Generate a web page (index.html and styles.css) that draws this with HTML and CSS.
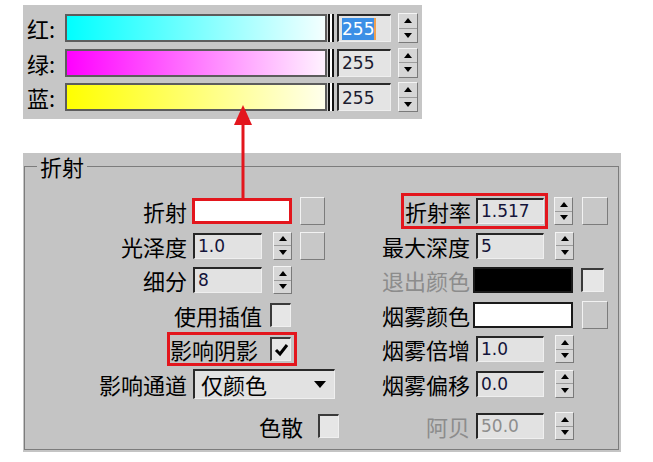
FILE: index.html
```html
<!DOCTYPE html>
<html lang="zh-CN">
<head>
    <meta charset="UTF-8">
    <title>折射</title>
    <link rel="stylesheet" href="styles.css">
</head>
<body>
    <div class="picker">
        <div class="chan">
            <span class="chan-lab">红:</span>
            <div class="bar bar-r"></div>
            <div class="thumb"></div>
            <div class="num"><span class="sel">255</span><span class="caret"></span></div>
            <span class="spin spin-big"><i class="up"></i><i class="dn"></i></span>
        </div>
        <div class="chan">
            <span class="chan-lab">绿:</span>
            <div class="bar bar-g"></div>
            <div class="thumb"></div>
            <div class="num">255</div>
            <span class="spin spin-big"><i class="up"></i><i class="dn"></i></span>
        </div>
        <div class="chan">
            <span class="chan-lab">蓝:</span>
            <div class="bar bar-b"></div>
            <div class="thumb"></div>
            <div class="num">255</div>
            <span class="spin spin-big"><i class="up"></i><i class="dn"></i></span>
        </div>
    </div>

    <div class="panel">
        <fieldset class="group">
            <legend>折射</legend>
            <div class="cols">
                <div class="col col-left">
                    <div class="row">
                        <span class="lab lab-tight">折射</span>
                        <span class="swatch swatch-hot"></span>
                        <span class="btn"></span>
                    </div>
                    <div class="row">
                        <span class="lab">光泽度</span>
                        <span class="field">1.0</span>
                        <span class="spin"><i class="up"></i><i class="dn"></i></span>
                        <span class="btn"></span>
                    </div>
                    <div class="row">
                        <span class="lab">细分</span>
                        <span class="field">8</span>
                        <span class="spin"><i class="up"></i><i class="dn"></i></span>
                    </div>
                    <div class="row">
                        <span class="lab lab-mid">使用插值</span>
                        <span class="check"></span>
                    </div>
                    <div class="row">
                        <span class="hl hl-shadow">
                            <span class="lab lab-auto">影响阴影</span>
                            <span class="check">
                                <svg width="17" height="20" viewBox="0 0 17 20"><polyline points="3,10 7,14 14,5" fill="none" stroke="#000" stroke-width="3"/></svg>
                            </span>
                        </span>
                    </div>
                    <div class="row">
                        <span class="lab">影响通道</span>
                        <span class="combo">仅颜色<i class="drop"></i></span>
                    </div>
                    <div class="row row-last">
                        <span class="lab lab-far">色散</span>
                        <span class="check"></span>
                    </div>
                </div>

                <div class="col col-right">
                    <div class="row">
                        <span class="hl hl-ior">
                            <span class="lab lab-auto">折射率</span>
                            <span class="field">1.517</span>
                        </span>
                        <span class="spin spin-near"><i class="up"></i><i class="dn"></i></span>
                        <span class="btn btn-r"></span>
                    </div>
                    <div class="row">
                        <span class="lab">最大深度</span>
                        <span class="field">5</span>
                        <span class="spin"><i class="up"></i><i class="dn"></i></span>
                    </div>
                    <div class="row">
                        <span class="lab lab-sw dim">退出颜色</span>
                        <span class="swatch swatch-black"></span>
                        <span class="check check-r"></span>
                    </div>
                    <div class="row">
                        <span class="lab lab-sw">烟雾颜色</span>
                        <span class="swatch swatch-white"></span>
                        <span class="btn btn-r"></span>
                    </div>
                    <div class="row">
                        <span class="lab">烟雾倍增</span>
                        <span class="field">1.0</span>
                        <span class="spin"><i class="up"></i><i class="dn"></i></span>
                    </div>
                    <div class="row">
                        <span class="lab">烟雾偏移</span>
                        <span class="field">0.0</span>
                        <span class="spin"><i class="up"></i><i class="dn"></i></span>
                    </div>
                    <div class="row row-last">
                        <span class="lab dim">阿贝</span>
                        <span class="field field-dim">50.0</span>
                        <span class="spin"><i class="up"></i><i class="dn"></i></span>
                    </div>
                </div>
            </div>
        </fieldset>
    </div>

    <!-- pointer from the refraction swatch up to the colour picker -->
    <svg class="arrow" width="30" height="100" viewBox="0 0 30 100">
        <line x1="15" y1="22" x2="15" y2="98" stroke="#e3161d" stroke-width="3"/>
        <polygon points="15,5 6,25 24,25" fill="#e3161d"/>
    </svg>
</body>
</html>
```

FILE: styles.css
```css
body {
    margin: 0;
    background-color: #fff;
    font-family: "Noto Sans CJK SC", "Noto Sans", sans-serif;
    color: #000;
    position: relative;
    width: 653px;
    height: 462px;
    overflow: hidden;
}

/* colour picker */
.picker {
    margin: 5px 0 0 23px;
    width: 399px;
    height: 114px;
    box-sizing: border-box;
    padding: 9px 0 0 4px;
    background-color: #c6c6c6;
    display: flex;
    flex-direction: column;
    gap: 6.5px;
}
.chan {
    display: flex;
    align-items: center;
    height: 28px;
}
.chan-lab {
    width: 38px;
    font-size: 22px;
    line-height: 28px;
}
.bar {
    width: 262px;
    height: 28px;
    box-sizing: border-box;
    border: 2px solid #5c5c5c;
}
.bar-r {
    background: linear-gradient(to right, #00ffff, #f4ffff);
}
.bar-g {
    background: linear-gradient(to right, #ff00ff, #fff2ff);
}
.bar-b {
    background: linear-gradient(to right, #ffff00, #ffffec);
}
.thumb {
    width: 9px;
    height: 28px;
    background: linear-gradient(to right, transparent 0 1px, #111 1px 3px, #fff 3px 5px, #111 5px 7px, transparent 7px);
}
.num {
    margin-left: 1px;
    width: 54px;
    height: 28px;
    box-sizing: border-box;
    border-style: solid;
    border-width: 2px 1px 1px 2px;
    border-color: #2a2a2a #efefef #efefef #2a2a2a;
    background-color: #e4e4e4;
    padding-left: 3px;
    display: flex;
    align-items: center;
    font-family: "DejaVu Sans", sans-serif;
    font-size: 17px;
    color: #1c1c30;
}
.sel {
    background-color: #3b8fe6;
    color: #fff;
    line-height: 22px;
}
.caret {
    width: 2px;
    height: 22px;
    background-color: #f0a050;
}

/* spinner */
.spin {
    margin-left: 11px;
    width: 19px;
    height: 28px;
    box-sizing: border-box;
    display: flex;
    flex-direction: column;
    border: 1px solid;
    border-color: #f4f4f4 #7a7a7a #7a7a7a #f4f4f4;
    background-color: #d6d6d6;
}
.spin-big {
    margin-left: 7px;
    width: 20px;
    height: 30px;
}
.spin-near {
    margin-left: 6px;
}
.spin i {
    flex: 1;
    display: flex;
    align-items: center;
    justify-content: center;
}
.spin .up {
    border-bottom: 1px solid #9c9c9c;
}
.spin i::before {
    content: "";
    border-left: 4px solid transparent;
    border-right: 4px solid transparent;
}
.spin .up::before {
    border-bottom: 5px solid #000;
}
.spin .dn::before {
    border-top: 5px solid #000;
}

/* refraction group */
.panel {
    margin: 34px 0 0 23px;
    width: 598px;
    height: 299px;
    box-sizing: border-box;
    padding: 0 2px 2px 1px;
    background-color: #c4c4c4;
}
.group {
    margin: 0;
    padding: 0;
    min-width: 0;
    height: 100%;
    box-sizing: border-box;
    border: 1px solid #7c7c7c;
}
.group legend {
    margin-left: 12px;
    padding: 0 3px;
    font-size: 22px;
    line-height: 26px;
}
.cols {
    display: flex;
    padding: 18px 0 0 5px;
}
.col {
    display: flex;
    flex-direction: column;
    gap: 6.5px;
}
.col-left {
    width: 310px;
}
.row {
    display: flex;
    align-items: center;
    height: 28px;
}
.row-last {
    margin-top: 8px;
}
.lab {
    font-size: 22px;
    line-height: 26px;
    text-align: right;
    white-space: nowrap;
}
.col-left .lab {
    width: 157px;
    margin-right: 6px;
}
.col-left .lab-tight {
    margin-right: 5px;
}
.col-left .lab-mid {
    width: 232px;
    margin-right: 8px;
}
.col-left .lab-far {
    width: 273px;
    margin-right: 15px;
}
.col-right .lab {
    width: 130px;
    margin-right: 6px;
}
.col-right .lab-sw {
    margin-right: 3px;
}
.col .lab-auto {
    width: auto;
}
.dim {
    color: #8c8c8c;
}

.field {
    width: 69px;
    height: 26px;
    box-sizing: border-box;
    border-style: solid;
    border-width: 2px 1px 1px 2px;
    border-color: #262626 #efefef #efefef #262626;
    background-color: #e2e2e2;
    padding-left: 3px;
    font-family: "DejaVu Sans", sans-serif;
    font-size: 17px;
    line-height: 23px;
    color: #14143a;
}
.col-right .field {
    width: 68px;
}
.field-dim {
    color: #8e8e8e;
}

.btn {
    margin-left: 8px;
    width: 25px;
    height: 28px;
    box-sizing: border-box;
    border: 1px solid;
    border-color: #f2f2f2 #7c7c7c #7c7c7c #f2f2f2;
    background-color: #c8c8c8;
}
.btn-r {
    margin-left: 9px;
    width: 26px;
}

.swatch {
    width: 100px;
    height: 26px;
    box-sizing: border-box;
    border: 2px solid #1a1a1a;
}
.swatch-hot {
    border: 3px solid #e3161d;
    background-color: #fff;
}
.swatch-black {
    background-color: #000;
}
.swatch-white {
    background-color: #fff;
}

.check {
    width: 21px;
    height: 24px;
    box-sizing: border-box;
    border-style: solid;
    border-width: 2px 1px 1px 2px;
    border-color: #3a3a3a #f0f0f0 #f0f0f0 #3a3a3a;
    background-color: #e6e6e6;
    display: flex;
    align-items: center;
    justify-content: center;
}
.check-r {
    margin-left: 8px;
    width: 23px;
}

.combo {
    width: 142px;
    height: 30px;
    box-sizing: border-box;
    border-style: solid;
    border-width: 2px 1px 1px 2px;
    border-color: #2a2a2a #efefef #efefef #2a2a2a;
    background-color: #e2e2e2;
    padding: 0 8px 0 6px;
    display: flex;
    align-items: center;
    justify-content: space-between;
    font-size: 22px;
}
.drop {
    border-left: 6px solid transparent;
    border-right: 6px solid transparent;
    border-top: 7px solid #000;
}

/* red highlight frames */
.hl {
    display: flex;
    align-items: center;
    border: 3px solid #e3161d;
}
.hl-shadow {
    margin-left: 137px;
    padding: 1px 3px 1px 0;
}
.hl-shadow .lab {
    margin-right: 12px;
}
.hl-ior {
    margin-left: 61px;
    padding: 2px 1px 2px 1px;
}
.hl-ior .lab {
    margin-right: 5px;
}

.arrow {
    position: absolute;
    left: 228px;
    top: 100px;
}
```
